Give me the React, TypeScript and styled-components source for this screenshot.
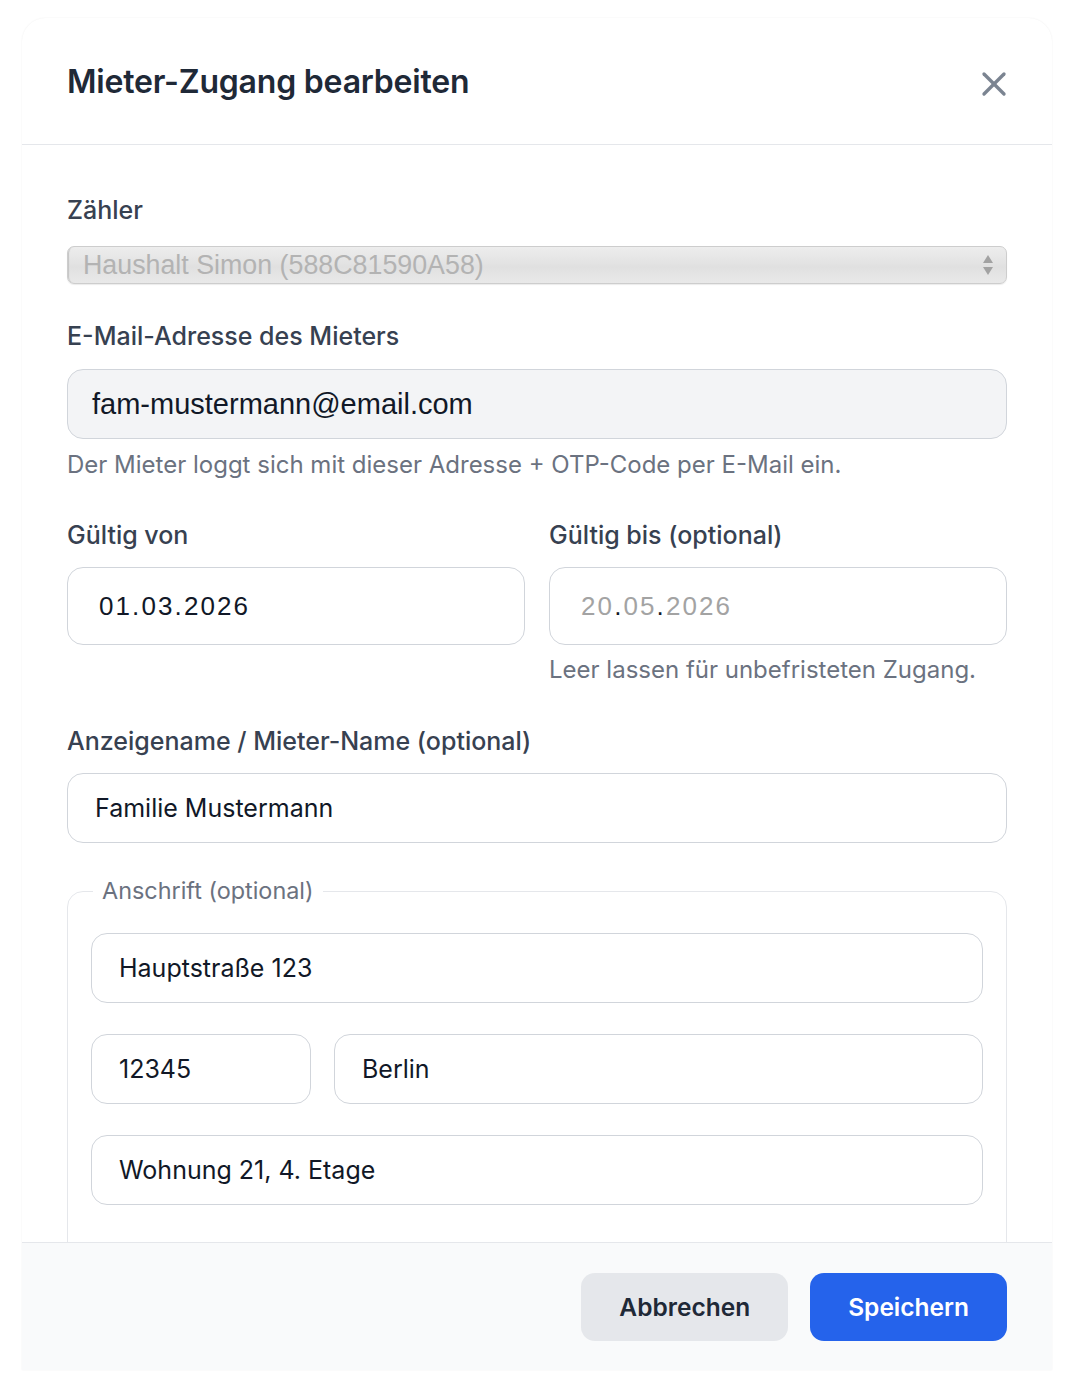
import React from "react";
import styled, { createGlobalStyle } from "styled-components";

const GlobalStyle = createGlobalStyle`
  html, body {
    margin: 0;
    padding: 0;
    background: #ffffff;
  }
  body {
    font-family: "Inter", "Liberation Sans", sans-serif;
    -webkit-font-smoothing: antialiased;
  }
  * {
    box-sizing: border-box;
  }
`;

const Page = styled.div`
  padding: 18px 26px 30px 22px;
`;

const Modal = styled.div`
  width: 1030px;
  background: #ffffff;
  border-radius: 24px 24px 0 0;
  box-shadow: 0 0 2px rgba(0, 0, 0, 0.07);
  overflow: hidden;
  display: flex;
  flex-direction: column;
`;

const Header = styled.div`
  height: 127px;
  flex-shrink: 0;
  display: flex;
  align-items: center;
  justify-content: space-between;
  padding: 0 38px 0 45px;
  border-bottom: 1px solid #e5e7eb;
`;

const Title = styled.h2`
  margin: 0;
  font-size: 32px;
  font-weight: 600;
  color: #1f2937;
  letter-spacing: -0.2px;
`;

const CloseButton = styled.button`
  width: 40px;
  height: 40px;
  margin-top: 6px;
  padding: 0;
  border: none;
  background: none;
  color: #7b8491;
  display: flex;
  align-items: center;
  justify-content: center;
  cursor: pointer;
`;

const Body = styled.div`
  height: 1097px;
  flex-shrink: 0;
  overflow-y: auto;
  scrollbar-width: none;
  padding: 49px 45px 0 45px;
`;

const Field = styled.div<{ $gap?: number }>`
  display: flex;
  flex-direction: column;
  margin-top: ${({ $gap }) => $gap ?? 0}px;
`;

const Label = styled.label<{ $space?: number }>`
  font-size: 25px;
  line-height: 32px;
  font-weight: 500;
  color: #374151;
  margin-bottom: ${({ $space }) => $space ?? 16}px;
`;

const NativeSelect = styled.div`
  height: 38px;
  display: flex;
  align-items: center;
  justify-content: space-between;
  padding: 0 12px 0 15px;
  border: 1px solid #cdcdcd;
  border-radius: 7px;
  background: linear-gradient(#ededed 0%, #e3e3e3 45%, #e0e0e0 55%, #e9e9e9 100%);
  box-shadow: inset 2px 0 1px -1px #c4c4c4, 0 1px 1px rgba(0, 0, 0, 0.08);
  font-family: "Liberation Sans", Arial, sans-serif;
  font-size: 26.8px;
  color: #b3b3b3;
`;

const Input = styled.div<{ $filled?: boolean; $size?: number; $font?: string; $pad?: number }>`
  height: 70px;
  display: flex;
  align-items: center;
  padding-left: ${({ $pad }) => $pad ?? 27}px;
  border: 1px solid #d1d5db;
  border-radius: 16px;
  background: ${({ $filled }) => ($filled ? "#f3f4f6" : "#ffffff")};
  font-family: ${({ $font }) => $font ?? `"Inter", "Liberation Sans", sans-serif`};
  font-size: ${({ $size }) => $size ?? 25}px;
  color: #111827;
  min-width: 0;
`;

const DateInput = styled(Input)`
  height: 78px;
  padding-left: 31px;
  font-family: "Liberation Sans", Arial, sans-serif;
  font-size: 26px;
  letter-spacing: 2.1px;
`;

const Muted = styled.span`
  color: #a3a3a3;
`;

const Hint = styled.p<{ $space?: number }>`
  margin: ${({ $space }) => $space ?? 11}px 0 0 0;
  font-size: 24px;
  line-height: 30px;
  color: #6b7280;
`;

const TwoCols = styled.div`
  display: grid;
  grid-template-columns: 1fr 1fr;
  gap: 24px;
  margin-top: 39px;
`;

const Fieldset = styled.fieldset`
  margin: 33px 0 0 0;
  padding: 0 23px 64px 23px;
  border: 1px solid #e5e7eb;
  border-radius: 16px;
  display: flex;
  flex-direction: column;
  gap: 31px;
  min-width: 0;
`;

const Legend = styled.legend`
  margin-left: 2px;
  padding: 0 9px;
  font-size: 23.4px;
  line-height: 30px;
  color: #6b7280;
`;

const AddressRow = styled.div`
  display: flex;
  gap: 23px;
  &:first-of-type {
    margin-top: 27px;
  }
  & > * {
    flex: 1;
  }
`;

const ZipBox = styled(Input)`
  && {
    flex: 0 0 220px;
  }
`;

const Footer = styled.div`
  height: 128px;
  flex-shrink: 0;
  display: flex;
  align-items: center;
  justify-content: flex-end;
  gap: 22px;
  padding: 0 45px;
  background: #f9fafb;
  border-top: 1px solid #e5e7eb;
`;

const Button = styled.button<{ $primary?: boolean }>`
  height: 68px;
  padding: 0 38px;
  border: none;
  border-radius: 14px;
  font-family: "Inter", "Liberation Sans", sans-serif;
  font-size: 24.5px;
  font-weight: 600;
  cursor: pointer;
  background: ${({ $primary }) => ($primary ? "#2563eb" : "#e5e7eb")};
  color: ${({ $primary }) => ($primary ? "#ffffff" : "#1f2937")};
`;

const CloseIcon = () => (
  <svg width="40" height="40" viewBox="0 0 24 24" fill="none" stroke="currentColor" strokeWidth="2" strokeLinecap="round">
    <path d="M18 6 6 18" />
    <path d="m6 6 12 12" />
  </svg>
);

const UpDown = () => (
  <svg width="12" height="22" viewBox="0 0 12 22" fill="#a2a2a2">
    <path d="M6 1 11 9H1Z" />
    <path d="M6 21 11 13H1Z" />
  </svg>
);

export default function App() {
  return (
    <>
      <GlobalStyle />
      <Page>
        <Modal>
          <Header>
            <Title>Mieter-Zugang bearbeiten</Title>
            <CloseButton aria-label="Schließen">
              <CloseIcon />
            </CloseButton>
          </Header>

          <Body>
            <Field>
              <Label $space={20}>Zähler</Label>
              <NativeSelect>
                <span>Haushalt Simon (588C81590A58)</span>
                <UpDown />
              </NativeSelect>
            </Field>

            <Field $gap={36}>
              <Label $space={17}>E-Mail-Adresse des Mieters</Label>
              <Input $filled $size={29} $pad={24} $font={`"Liberation Sans", Arial, sans-serif`}>
                fam-mustermann@email.com
              </Input>
              <Hint>Der Mieter loggt sich mit dieser Adresse + OTP-Code per E-Mail ein.</Hint>
            </Field>

            <TwoCols>
              <Field>
                <Label>Gültig von</Label>
                <DateInput>01.03.2026</DateInput>
              </Field>
              <Field>
                <Label>Gültig bis (optional)</Label>
                <DateInput>
                  <Muted>20</Muted>.<Muted>05</Muted>.<Muted>2026</Muted>
                </DateInput>
                <Hint $space={10}>Leer lassen für unbefristeten Zugang.</Hint>
              </Field>
            </TwoCols>

            <Field $gap={40}>
              <Label>Anzeigename / Mieter-Name (optional)</Label>
              <Input>Familie Mustermann</Input>
            </Field>

            <Fieldset>
              <Legend>Anschrift (optional)</Legend>
              <AddressRow>
                <Input>Hauptstraße 123</Input>
              </AddressRow>
              <AddressRow>
                <ZipBox>12345</ZipBox>
                <Input>Berlin</Input>
              </AddressRow>
              <AddressRow>
                <Input>Wohnung 21, 4. Etage</Input>
              </AddressRow>
            </Fieldset>
          </Body>

          <Footer>
            <Button>Abbrechen</Button>
            <Button $primary>Speichern</Button>
          </Footer>
        </Modal>
      </Page>
    </>
  );
}
